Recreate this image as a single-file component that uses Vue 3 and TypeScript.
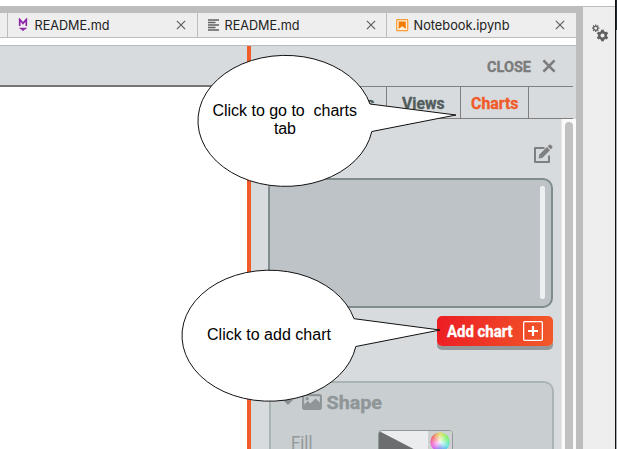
<script setup lang="ts">
interface FileTab {
  name: string
  kind: 'markdown' | 'text' | 'notebook'
  width: number
}

const fileTabs: FileTab[] = [
  { name: 'README.md', kind: 'markdown', width: 75 },
  { name: 'README.md', kind: 'text', width: 75 },
  { name: 'Notebook.ipynb', kind: 'notebook', width: 96 },
]

const smallTeeth: number[] = [0, 45, 90, 135, 180, 225, 270, 315]
const largeTeeth: number[] = [0, 60, 120, 180, 240, 300]
</script>

<template>
  <div class="window">
    <div class="main">
      <div class="top-strip"></div>
      <div class="file-tabs">
        <div class="tab-stub"></div>
        <div v-for="(tab, i) in fileTabs" :key="i" class="file-tab">
          <svg class="file-icon" width="14" height="14" viewBox="0 0 14 14">
            <g v-if="tab.kind === 'markdown'">
              <path d="M3.7 8V1.5L7 5.4L10.3 1.5V8" fill="none" stroke="#8e24aa" stroke-width="1.7" />
              <path d="M3 9.7H11.2L9.2 11.5H8.6L7 13.2L5.5 11.5H4.9Z" fill="#8e24aa" />
            </g>
            <path
              v-else-if="tab.kind === 'text'"
              d="M2 2H13M2 4.5H9.5M2 7H13M2 9.5H9.5M2 12H13"
              stroke="#616161"
              stroke-width="1.3"
            />
            <g v-else>
              <rect x="1.7" y="1.7" width="11" height="11" rx="0.5" fill="#fff3e0" stroke="#f99a35" stroke-width="1.2" />
              <path d="M3.6 3.5H10.8V11L7.2 8.3L3.6 11Z" fill="#f57c00" />
            </g>
          </svg>
          <svg class="file-name" width="110" height="24">
            <text x="0.5" y="17" :textLength="tab.width" lengthAdjust="spacingAndGlyphs">{{ tab.name }}</text>
          </svg>
          <svg class="file-close" width="10" height="10" viewBox="0 0 10 10">
            <path d="M0.9 0.9L9.1 9.1M9.1 0.9L0.9 9.1" stroke="#616161" stroke-width="1.25" />
          </svg>
        </div>
      </div>
      <div class="gap-strip"></div>
      <div class="workspace">
        <div class="canvas-side">
          <div class="canvas-toolbar"></div>
        </div>
        <aside class="panel">
          <header class="panel-head">
            <svg width="48" height="20">
              <text class="bold close-label" x="1" y="15.5" textLength="44" lengthAdjust="spacingAndGlyphs">CLOSE</text>
            </svg>
            <svg width="14" height="14" viewBox="0 0 14 14">
              <path d="M1.4 1.4L12.6 12.6M12.6 1.4L1.4 12.6" stroke="#7b7b7b" stroke-width="2.6" />
            </svg>
          </header>
          <nav class="panel-tabs">
            <div class="panel-tab first">
              <svg width="14" height="30">
                <text class="bold tab-label" x="2" y="22">s</text>
              </svg>
            </div>
            <div class="panel-tab views">
              <svg width="73" height="30">
                <text class="bold tab-label" x="15" y="22" textLength="42.5" lengthAdjust="spacingAndGlyphs">Views</text>
              </svg>
            </div>
            <div class="panel-tab charts">
              <svg width="67" height="30">
                <text class="bold tab-label active" x="10" y="22" textLength="47.5" lengthAdjust="spacingAndGlyphs">Charts</text>
              </svg>
            </div>
          </nav>
          <div class="panel-scroll">
            <div class="panel-content">
              <svg class="edit-icon" width="20" height="20" viewBox="0 0 20 20">
                <path d="M11.5 4.1H2V18H16V11.5" fill="none" stroke="#7d7f80" stroke-width="2" stroke-linejoin="round" />
                <path d="M5.5 14.5L6.2 10.8L13.9 3.1L17 6.2L9.3 13.9Z" fill="#7d7f80" />
                <path d="M14.7 2.3L16.3 0.7Q17 0.2 17.7 0.8L19.2 2.3Q19.8 3 19.3 3.7L17.7 5.4Z" fill="#7d7f80" />
                <path d="M6.8 12.2L7.9 13.3" stroke="#b5b8ba" stroke-width="0.7" />
              </svg>
              <div class="chart-list"><div class="list-thumb"></div></div>
              <button class="add-button">
                <svg width="72" height="24">
                  <text class="bold add-label" x="2" y="18" textLength="65.5" lengthAdjust="spacingAndGlyphs">Add chart</text>
                </svg>
                <svg width="20" height="20" viewBox="0 0 20 20">
                  <rect x="0.65" y="0.65" width="18.7" height="18.7" rx="1" fill="none" stroke="#fff" stroke-width="1.3" />
                  <path d="M10 5V15M5 10H15" stroke="#fff" stroke-width="2.2" />
                </svg>
              </button>
              <section class="shape-card">
                <div class="shape-head">
                  <svg width="14" height="16" viewBox="0 0 14 16">
                    <path d="M1.5 5.5H12.5L7 11Z" fill="#8a9193" />
                  </svg>
                  <svg width="20" height="16" viewBox="0 0 20 16">
                    <rect x="1.1" y="1.1" width="17.8" height="13.8" rx="1.2" fill="none" stroke="#8f9698" stroke-width="2.1" />
                    <path d="M2 14V10.6L6 7L8.4 9.5L13.6 4.5L18 8.8V14Z" fill="#8f9698" />
                    <circle cx="5.1" cy="4.8" r="1.8" fill="#8f9698" />
                  </svg>
                  <svg width="60" height="24">
                    <text class="bold shape-label" x="0.5" y="18.5" textLength="55.5" lengthAdjust="spacingAndGlyphs">Shape</text>
                  </svg>
                </div>
                <div class="fill-row">
                  <svg width="24" height="24">
                    <text class="fill-label" x="0" y="20" textLength="21.5" lengthAdjust="spacingAndGlyphs">Fill</text>
                  </svg>
                  <div class="swatch">
                    <svg width="49" height="25"><path d="M0 0L49 25.5H0Z" fill="#6b6d6f" /></svg>
                    <div class="wheel"></div>
                  </div>
                </div>
              </section>
            </div>
            <div class="scroll-track"><div class="scroll-thumb"></div></div>
          </div>
        </aside>
      </div>
    </div>
    <div class="divider"></div>
    <div class="rail">
      <svg width="18" height="18" viewBox="0 0 18 18">
        <g transform="translate(4.7 4.2)" stroke="#616161">
          <circle r="2.1" fill="none" stroke-width="1.3" />
          <path v-for="a in smallTeeth" :key="a" d="M0 -2.4V-3.7" stroke-width="1.3" :transform="`rotate(${a})`" />
        </g>
        <g transform="translate(11.5 11.5)" stroke="#616161">
          <circle r="3.3" fill="none" stroke-width="2.5" />
          <path v-for="a in largeTeeth" :key="a" d="M0 -3.6V-5.8" stroke-width="2.8" :transform="`rotate(${a})`" />
        </g>
      </svg>
    </div>
    <div class="edge"></div>

    <svg class="callouts" width="617" height="449" viewBox="0 0 617 449">
      <g fill="#fff" stroke="#111" stroke-width="1">
        <path d="M370 104A87.5 65.5 0 1 0 371.8 131.5L456 115Z" />
        <path d="M354 318.7A87.5 65.5 0 1 0 355.8 346.5L440 330Z" />
      </g>
      <g class="callout-text">
        <text x="212.5" y="115.5" textLength="144.5" xml:space="preserve">Click to go to&#160; charts</text>
        <text x="274" y="134" textLength="22">tab</text>
        <text x="207" y="340" textLength="124">Click to add chart</text>
      </g>
    </svg>
  </div>
</template>

<style>
body {
  margin: 0;
  overflow: hidden;
}
</style>

<style scoped>
.window {
  position: relative;
  display: flex;
  box-sizing: border-box;
  width: 617px;
  height: 449px;
  padding-top: 6px;
  overflow: hidden;
  background: #fff;
  font-family: Roboto, sans-serif;
}
svg {
  display: block;
  flex: none;
}
.main {
  display: flex;
  flex-direction: column;
  width: 576px;
}
.top-strip {
  height: 7px;
  background: #bdbdbd;
}
.file-tabs {
  display: flex;
  height: 24px;
  border-bottom: 1px solid #bdbdbd;
  background: #eee;
}
.tab-stub {
  width: 7px;
}
.file-tab {
  display: flex;
  align-items: center;
  box-sizing: border-box;
  width: 189.5px;
  padding-left: 8px;
  border-left: 1px solid #bdbdbd;
}
.file-name {
  margin: 0 22px 0 4px;
  width: 124px;
}
.file-name text {
  font: 13.3px Inter, sans-serif;
  fill: #212121;
}
.file-close {
  margin-left: -4px;
}
.gap-strip {
  height: 7px;
  border-bottom: 1px solid #b9bbbc;
}
.workspace {
  display: flex;
  flex: 1;
  min-height: 0;
}
.canvas-side {
  width: 247px;
  background: #fff;
}
.canvas-toolbar {
  height: 39px;
  border-bottom: 2px solid #747674;
  background: #d7dbde;
}
.panel {
  display: flex;
  flex-direction: column;
  width: 325px;
  border-left: 4px solid #f15a29;
  background: #d7dbde;
}
.panel-head {
  display: flex;
  align-items: center;
  justify-content: flex-end;
  gap: 8px;
  height: 40px;
  padding-right: 20px;
}
.bold {
  font-family: Roboto, sans-serif;
  font-weight: 700;
  stroke-width: 0.35px;
}
.close-label {
  font-size: 15.5px;
  fill: #7b7b7b;
  stroke: #7b7b7b;
}
.panel-tabs {
  display: flex;
  box-sizing: border-box;
  width: 322px;
  height: 33px;
  border-top: 1px solid #808080;
  border-bottom: 1px solid #808080;
}
.panel-tab {
  box-sizing: border-box;
  border-right: 1px solid #808080;
}
.first {
  width: 136px;
  padding-left: 113px;
}
.views {
  width: 74px;
}
.charts {
  width: 68px;
}
.tab-label {
  font-size: 16.5px;
  fill: #525d5d;
  stroke: #525d5d;
}
.tab-label.active {
  fill: #f15a29;
  stroke: #f15a29;
}
.panel-scroll {
  display: flex;
  flex: 1;
  min-height: 0;
}
.panel-content {
  display: flex;
  flex-direction: column;
  align-items: flex-end;
  box-sizing: border-box;
  width: 310px;
  padding: 25px 8px 0 17px;
  overflow: hidden;
}
.edit-icon {
  margin-right: 0;
}
.chart-list {
  flex: none;
  display: flex;
  justify-content: flex-end;
  box-sizing: border-box;
  width: 285px;
  height: 130px;
  margin-top: 14px;
  padding: 6px;
  border: 2px solid #7f8c8d;
  border-radius: 10px;
  background: #bdc3c7;
}
.list-thumb {
  width: 5px;
  height: 113px;
  border-radius: 2px;
  background: #ecf0f1;
}
.add-button {
  display: flex;
  flex: none;
  align-items: center;
  justify-content: space-between;
  box-sizing: border-box;
  width: 116px;
  height: 30px;
  margin-top: 8px;
  padding: 0 10px 0 8px;
  border: 0;
  border-radius: 5px;
  background: linear-gradient(100deg, #ed1c24, #f15a29);
  box-shadow: 0 4px 0 #95999b;
}
.add-label {
  font-size: 16px;
  fill: #fff;
  stroke: #fff;
}
.shape-card {
  flex: none;
  box-sizing: border-box;
  width: 285px;
  height: 110px;
  margin: 35px -1px 0 0;
  border: 2px solid #abb4b5;
  border-radius: 10px;
  background: #c9ced0;
}
.shape-head {
  display: flex;
  align-items: center;
  gap: 4px;
  height: 24px;
  margin-top: 7px;
  padding-left: 10px;
}
.shape-head svg:nth-child(2) {
  margin-left: 3px;
}
.shape-label {
  font-size: 19px;
  fill: #8f9698;
  stroke: #8f9698;
}
.fill-row {
  display: flex;
  align-items: flex-start;
  gap: 63px;
  margin-top: 15px;
  padding-left: 20px;
}
.fill-label {
  font: 400 17.5px Roboto, sans-serif;
  fill: #92999b;
}
.swatch {
  display: flex;
  box-sizing: border-box;
  width: 75px;
  height: 27px;
  margin-top: 1px;
  overflow: hidden;
  border: 1px solid #929799;
  border-radius: 4px;
  background: #ebecee;
}
.wheel {
  flex: 1;
  background:
    radial-gradient(circle at 12px 11px, rgba(255, 255, 255, 0.9) 0, rgba(255, 255, 255, 0) 9px, transparent 9.3px, #cfd0d1 9.8px),
    conic-gradient(from 0deg at 12px 11px, #e3df65, #77f16b, #63e6e3, #6b75f1, #ef69e9, #f16970, #e3df65);
}
.scroll-track {
  box-sizing: border-box;
  width: 15px;
  padding: 3px 3px 0;
  border-left: 1px solid #e8e8e8;
  background: #fafafa;
}
.scroll-thumb {
  width: 8px;
  height: 340px;
  border-radius: 4px;
  background: #c1c1c1;
}
.divider {
  width: 7px;
  background: #bdbdbd;
}
.rail {
  box-sizing: border-box;
  width: 32px;
  padding: 17px 0 0 8px;
  border-top: 1px solid #bdbdbd;
  background: #eee;
}
.edge {
  width: 2px;
  margin-top: -6px;
  background:
    linear-gradient(#111, #111) 0 0 / 1px 100% no-repeat,
    linear-gradient(#222b2f 30px, #a9acb0 30px);
}
.callouts {
  position: absolute;
  top: 0;
  left: 0;
}
.callout-text {
  font: 16px "Liberation Sans", Arial, sans-serif;
  fill: #000;
}
</style>
